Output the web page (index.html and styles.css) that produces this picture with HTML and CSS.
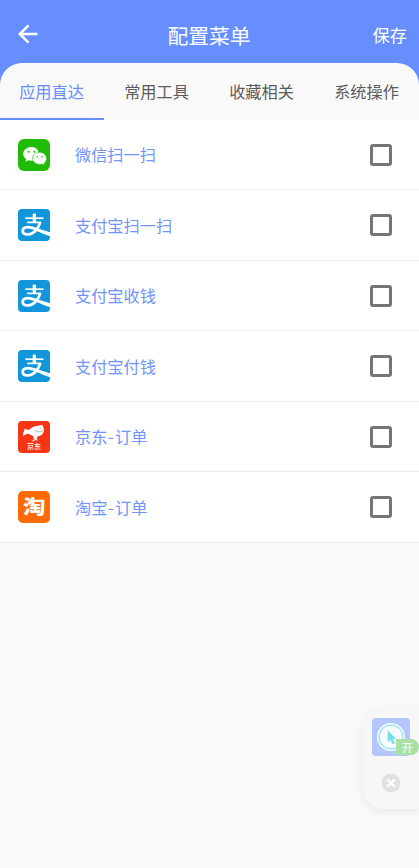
FILE: index.html
```html
<!DOCTYPE html>
<html lang="zh-CN">
<head>
<meta charset="utf-8">
<meta name="viewport" content="width=device-width, initial-scale=1">
<title>配置菜单</title>
<link rel="stylesheet" href="styles.css">
</head>
<body>
<svg width="0" height="0" class="defs" aria-hidden="true">
  <symbol id="alipay" viewBox="0 0 32 32">
    <rect width="32" height="32" rx="4" fill="#1296db"/>
    <g fill="none" stroke="#fff">
      <path d="M16.3 4.6V14" stroke-width="3.2"/>
      <path d="M7.3 9.2H25.5" stroke-width="1.7"/>
      <path d="M9.2 13.4H23" stroke-width="1.7"/>
      <path d="M22.3 13C21 18 16.5 25.2 10 25.4C3 25.6 3 18.6 9.5 18.2C15 17.9 22 22.4 32 25" stroke-width="2.8"/>
    </g>
    <path d="M20 19.8L32 23.2V27.3Q25 25 18.5 21.4Z" fill="#fff"/>
  </symbol>
</svg>
<header class="bar">
  <svg class="back" viewBox="0 0 20 20"><path d="M19.5 10H2M10.5 1.3L1.8 10L10.5 18.7" fill="none" stroke="#fff" stroke-width="2.5"/></svg>
  <h1>配置菜单</h1>
  <span class="save">保存</span>
</header>
<div class="tabs-bg">
  <nav class="tabs">
    <span class="tab active">应用直达</span>
    <span class="tab">常用工具</span>
    <span class="tab">收藏相关</span>
    <span class="tab">系统操作</span>
  </nav>
</div>
<main class="list">
  <div class="row">
    <svg class="icon" viewBox="0 0 32 32">
      <rect width="32" height="32" rx="6" fill="#20bc03"/>
      <path d="M13.5 8C8.8 8 5.2 11 5.2 14.8C5.2 17 6.4 18.9 8.2 20.1L7.5 22.8L10.6 21.2Q13 22 15.5 21.4C23 21 23 8 13.5 8Z" fill="#fff"/>
      <path d="M21.6 13.2C17.6 13.2 14.5 16 14.5 19.3C14.5 22.7 17.6 25.4 21.6 25.4Q23.1 25.4 24.3 25L26.8 26.4L26.2 24.1C31.4 20.5 27.8 13.2 21.6 13.2Z" fill="#fff" stroke="#20bc03" stroke-width=".6"/>
      <g fill="#20bc03"><circle cx="10.7" cy="12.7" r="1"/><circle cx="16.3" cy="12.7" r="1"/><circle cx="19.3" cy="17.8" r=".8"/><circle cx="24" cy="17.8" r=".8"/></g>
    </svg>
    <span class="name">微信扫一扫</span><i class="check"></i>
  </div>
  <div class="row"><svg class="icon"><use href="#alipay"/></svg><span class="name">支付宝扫一扫</span><i class="check"></i></div>
  <div class="row"><svg class="icon"><use href="#alipay"/></svg><span class="name">支付宝收钱</span><i class="check"></i></div>
  <div class="row"><svg class="icon"><use href="#alipay"/></svg><span class="name">支付宝付钱</span><i class="check"></i></div>
  <div class="row">
    <svg class="icon" viewBox="0 0 32 32">
      <rect width="32" height="32" rx="4" fill="#f63515"/>
      <path d="M5 14.8C5 12 6 10.2 6.8 7.5C8.3 8.5 9 9.2 11 8.7C13 7.5 14 5.7 17.5 5.2L21.5 4.5C23 3.8 25 3.8 24.8 5.5C26.8 8 26 12.8 23 14.2C21.5 15 20.3 15.2 19.5 15.5L18.7 18.2L20.2 19.3H17.2L17 16.8L16.2 20.2H13.7L15.8 18.5L15.2 15C12.8 14.3 10.5 12.6 9.2 12.8C7.5 13.1 6.8 15 5 14.8Z" fill="#fff"/>
      <path d="M16.2 9.6Q20 12 25 9.7" fill="none" stroke="#888" stroke-width=".6"/><circle cx="22.5" cy="7.4" r=".5" fill="#999"/>
      <text class="jd" x="16" y="27.9" text-anchor="middle">京东</text>
    </svg>
    <span class="name">京东<b class="dash">-</b>订单</span><i class="check"></i>
  </div>
  <div class="row">
    <svg class="icon" viewBox="0 0 32 32">
      <rect width="32" height="32" rx="5" fill="#ff6a04"/>
      <text class="tao" transform="translate(16.3 23.3) scale(1.12 .94)" text-anchor="middle">淘</text>
    </svg>
    <span class="name">淘宝<b class="dash">-</b>订单</span><i class="check"></i>
  </div>
</main>
<aside class="float">
  <div class="app">
    <svg viewBox="0 0 38 38"><rect width="38" height="38" rx="3.5" fill="#b5c6fd"/><circle cx="19" cy="19" r="14" fill="#f8fbff"/><circle cx="19" cy="19" r="11.9" fill="none" stroke="#8ce5ed" stroke-width="1.3"/><path d="M15.7 12.3V24.5L18.4 22L20.8 26.4L23 25.2L20.7 21.1L24 20.8Z" fill="#74e0e8"/></svg>
    <span class="badge">开</span>
  </div>
  <svg class="close" viewBox="0 0 20 20"><circle cx="10" cy="10" r="9.5" fill="#e1e1e1"/><path d="M6.2 6.2L13.8 13.8M13.8 6.2L6.2 13.8" stroke="#fff" stroke-width="2.3"/></svg>
</aside>
</body>
</html>
```
FILE: styles.css
```css
* { box-sizing: border-box; }
body {
  margin: 0;
  height: 868px;
  overflow: hidden;
  background: #f9f9f9;
  font-family: "Noto Sans CJK SC", sans-serif;
}
.defs { position: absolute; }
.bar {
  height: 63.4px;
  padding: 5px 12px 0 18px;
  display: grid;
  grid-template-columns: 1fr auto 1fr;
  align-items: center;
  background: #678eff;
  color: #fff;
}
.back { width: 20px; height: 20px; }
h1 { margin: 1px 7px 0 0; font-size: 20.8px; font-weight: 400; line-height: 30px; }
.save { justify-self: end; margin-top: 1px; font-size: 17.2px; line-height: 30px; }
.tabs-bg { background: #678eff; }
.tabs {
  height: 56.4px;
  display: grid;
  grid-template-columns: repeat(4, 105px);
  background: #f9f9f9;
  border-radius: 22px 22px 0 0;
  overflow: hidden;
}
.tab {
  height: 56.4px;
  padding-right: 2px;
  text-align: center;
  font-size: 16.2px;
  line-height: 56px;
  color: #5c5c5c;
}
.active { color: #678eff; box-shadow: inset -1px 0 #f9f9f9, inset 0 -2px #678eff; }
.row {
  height: 70.5px;
  padding: 0 27px 0 18px;
  display: flex;
  align-items: center;
  background: #fff;
  border-bottom: 1px solid #ededed;
}
.icon { width: 32px; height: 32px; flex: none; }
.name { margin: -1px 0 0 25px; flex: 1; font-size: 16.2px; line-height: 24px; color: #7093fc; }
.dash { display: inline-block; width: 7.6px; font-weight: 400; text-align: center; transform: scaleX(1.2); }
.check { width: 22px; height: 22px; border: 3px solid #757575; border-radius: 3px; }
.jd { font-size: 7px; font-weight: 500; fill: #fff; }
.tao { font-size: 20px; font-weight: 900; fill: #fff; }
.float {
  position: absolute;
  right: 0;
  top: 709px;
  width: 56px;
  height: 100px;
  padding: 9px 0 0 9px;
  background: #f7f7f7;
  border-radius: 20px 0 0 20px;
  box-shadow: 0 3px 8px rgba(0, 0, 0, .07);
}
.app { position: relative; width: 38px; height: 38px; }
.app svg { display: block; width: 38px; height: 38px; }
.badge {
  position: absolute;
  left: 24px;
  top: 21px;
  width: 23px;
  height: 16px;
  border-radius: 0 8px 8px 0;
  background: #a9e1a4;
  color: #fff;
  font-size: 11px;
  line-height: 16px;
  text-align: center;
}
.close { display: block; width: 20px; height: 20px; margin: 17px 0 0 9px; }
```
